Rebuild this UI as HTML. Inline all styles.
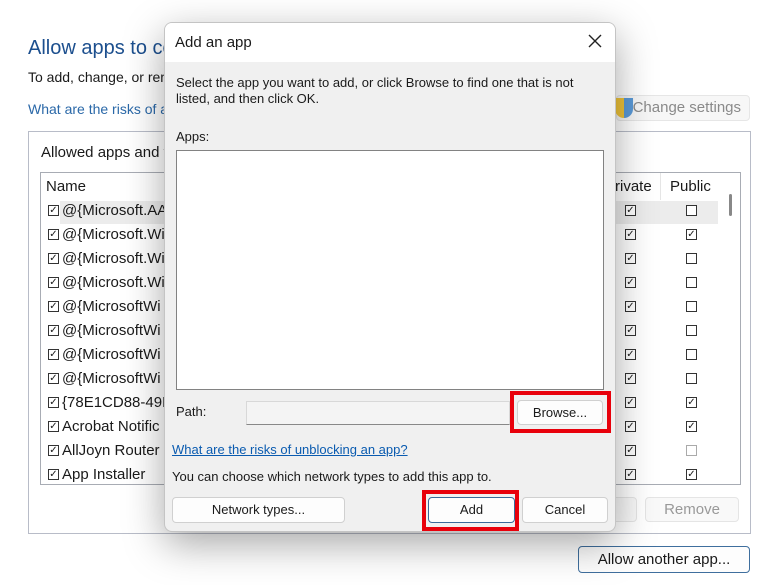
<!DOCTYPE html>
<html><head><style>
*{box-sizing:border-box;margin:0;padding:0}
body{width:772px;height:585px;background:#fff;position:relative;overflow:hidden;font-family:"Liberation Sans","DejaVu Sans",sans-serif;color:#1a1a1a}
.a{position:absolute;white-space:nowrap}
.cb{position:absolute;width:11px;height:11px;border:1px solid #333;background:#fff;font-size:10px;line-height:9px;text-align:center;font-weight:bold}
.btn{position:absolute;background:#fdfdfd;border:1px solid #d0d0d0;border-radius:4px;text-align:center;font-size:13px;line-height:23px}
.red{position:absolute;border:4px solid #e8000b}
</style></head><body>
<div class="a" style="left:28px;top:37px;font-size:20px;color:#1c4f8e">Allow apps to communicate</div>
<div class="a" style="left:28px;top:69px;font-size:14px">To add, change, or remove allowed apps</div>
<div class="a" style="left:28px;top:101px;font-size:14px;color:#2a68a8">What are the risks of allowing</div>
<div class="btn" style="left:616px;top:95px;width:134px;height:26px;font-size:15px;color:#8a8a8a;background:#f7f7f7;border-color:#e6e6e6;text-align:right;padding-right:8px">Change settings</div>
<div class="a" style="left:615px;top:98px;width:18px;height:20px;border-radius:0 0 9px 9px;background:linear-gradient(90deg,#f0c43a 50%,#5a9ad8 50%)"></div>
<div class="a" style="left:28px;top:131px;width:723px;height:403px;border:1px solid #b8bcc8"></div>
<div class="a" style="left:41px;top:144px;font-size:15px">Allowed apps and features:</div>
<div class="a" style="left:40px;top:172px;width:701px;height:313px;border:1px solid #a8acb4;background:#fff;overflow:hidden">
 <div class="a" style="left:5px;top:5px;font-size:15px">Name</div>
 <div class="a" style="left:564px;top:5px;font-size:15px">Private</div>
 <div class="a" style="left:619px;top:0;width:1px;height:27px;background:#e5e5e5"></div>
 <div class="a" style="left:629px;top:5px;font-size:15px">Public</div>
 <div class="a" style="left:19px;top:28px;width:658px;height:23px;background:#ececec"></div>
 <div class="a" style="left:688px;top:21px;width:3px;height:22px;background:#888;border-radius:2px"></div>
</div>
<div id="rows"></div>
<div class="btn" style="left:560px;top:497px;width:77px;height:25px;color:#aaa;border-color:#e5e5e5;background:#f9f9f9"></div>
<div class="btn" style="left:645px;top:497px;width:94px;height:25px;color:#999;border-color:#e5e5e5;background:#f9f9f9;font-size:15px">Remove</div>
<div class="btn" style="left:578px;top:546px;width:172px;height:27px;border-color:#3f6f9e;font-size:15px;line-height:25px">Allow another app...</div>

<div class="a" style="left:164px;top:22px;width:452px;height:510px;border:1px solid #c4c4c4;border-radius:8px;background:#f0f0f0;box-shadow:0 12px 40px rgba(0,0,0,.35);overflow:hidden">
 <div class="a" style="left:0;top:0;width:452px;height:39px;background:#fff"></div>
 <div class="a" style="left:10px;top:11px;font-size:15px">Add an app</div>
 <svg class="a" style="left:423px;top:11px" width="14" height="14"><path d="M1 1L13 13M13 1L1 13" stroke="#222" stroke-width="1.4"/></svg>
 <div class="a" style="left:11px;top:52px;font-size:13px;line-height:16px">Select the app you want to add, or click Browse to find one that is not<br>listed, and then click OK.</div>
 <div class="a" style="left:11px;top:106px;font-size:13px">Apps:</div>
 <div class="a" style="left:11px;top:127px;width:428px;height:240px;background:#fff;border:1px solid #828282"></div>
 <div class="a" style="left:11px;top:381px;font-size:13px">Path:</div>
 <div class="a" style="left:81px;top:378px;width:264px;height:24px;background:#f4f4f4;border:1px solid #d8d8d8;border-bottom-color:#888"></div>
 <div class="btn" style="left:352px;top:377px;width:86px;height:25px">Browse...</div>
 <div class="a" style="left:7px;top:419px;font-size:13px;color:#0a5bb0;text-decoration:underline">What are the risks of unblocking an app?</div>
 <div class="a" style="left:7px;top:446px;font-size:13px">You can choose which network types to add this app to.</div>
 <div class="btn" style="left:7px;top:474px;width:173px;height:26px">Network types...</div>
 <div class="btn" style="left:263px;top:474px;width:87px;height:26px;border-color:#3a6a9a">Add</div>
 <div class="btn" style="left:357px;top:474px;width:86px;height:26px">Cancel</div>
</div>
<div class="red" style="left:510px;top:391px;width:101px;height:42px"></div>
<div class="red" style="left:422px;top:490px;width:97px;height:41px"></div>
<script>
var names=["@{Microsoft.AAD","@{Microsoft.Wi","@{Microsoft.Wi","@{Microsoft.Wi","@{MicrosoftWi","@{MicrosoftWi","@{MicrosoftWi","@{MicrosoftWi","{78E1CD88-49E","Acrobat Notific","AllJoyn Router","App Installer"];
var pub=[0,1,0,0,0,0,0,0,1,1,0,1],h="";
for(var i=0;i<12;i++){var y=199+i*24;
h+='<div class="cb" style="left:48px;top:'+(y+6)+'px">✓</div><div class="a" style="left:62px;top:'+(y+3)+'px;font-size:15px">'+names[i]+'</div>';
h+='<div class="cb" style="left:625px;top:'+(y+6)+'px">✓</div><div class="cb" style="left:686px;top:'+(y+6)+'px;'+(i==10?'border-color:#aaa':'')+'">'+(pub[i]?'✓':'')+'</div>';}
document.getElementById("rows").innerHTML=h;
</script>
</body></html>
